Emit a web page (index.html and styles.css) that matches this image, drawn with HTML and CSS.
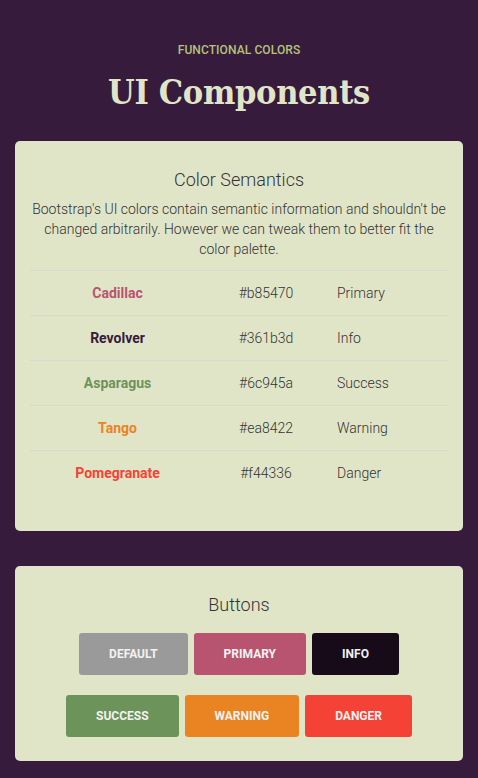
FILE: index.html
```html
<!DOCTYPE html>
<html>
<head>
<meta charset="utf-8">
<link rel="stylesheet" href="styles.css">
</head>
<body>
<header class="hero">
  <div class="eyebrow">FUNCTIONAL COLORS</div>
  <h1 class="title">UI Components</h1>
</header>
<section class="card card-colors">
  <h2 class="card-title">Color Semantics</h2>
  <p class="lead">Bootstrap's UI colors contain semantic information and shouldn't be changed arbitrarily. However we can tweak them to better fit the color palette.</p>
  <div class="table">
    <div class="row"><span class="name c-primary">Cadillac</span><span class="hex">#b85470</span><span class="label">Primary</span></div>
    <div class="row"><span class="name c-info">Revolver</span><span class="hex">#361b3d</span><span class="label">Info</span></div>
    <div class="row"><span class="name c-success">Asparagus</span><span class="hex">#6c945a</span><span class="label">Success</span></div>
    <div class="row"><span class="name c-warning">Tango</span><span class="hex">#ea8422</span><span class="label">Warning</span></div>
    <div class="row"><span class="name c-danger">Pomegranate</span><span class="hex">#f44336</span><span class="label">Danger</span></div>
  </div>
</section>
<section class="card card-buttons">
  <h2 class="card-title">Buttons</h2>
  <div class="btn-row">
    <span class="btn btn-default">DEFAULT</span>
    <span class="btn btn-primary">PRIMARY</span>
    <span class="btn btn-info">INFO</span>
  </div>
  <div class="btn-row">
    <span class="btn btn-success">SUCCESS</span>
    <span class="btn btn-warning">WARNING</span>
    <span class="btn btn-danger">DANGER</span>
  </div>
</section>
</body>
</html>
```
FILE: styles.css
```css
html, body {
  margin: 0;
  padding: 0;
  background: #361b3d;
  font-family: Roboto, "Liberation Sans", sans-serif;
  color: #333;
}
body {
  padding: 0 15px 20px;
}
.hero {
  text-align: center;
  padding-top: 43px;
  padding-bottom: 27px;
}
.eyebrow {
  font-size: 12px;
  font-weight: 500;
  color: #b5c27a;
  line-height: 14px;
  letter-spacing: 0.1px;
}
.title {
  margin: 13px 0 0;
  font-family: "DejaVu Serif Condensed", "DejaVu Serif", "Liberation Serif", serif;
  font-weight: bold;
  font-size: 34px;
  line-height: 44px;
  color: #e1e5c8;
  letter-spacing: -0.3px;
}
.card {
  background: #e1e5c8;
  border-radius: 5px;
  padding: 15px;
  text-align: center;
}
.card-colors {
  padding-bottom: 36px;
}
.card-buttons {
  margin-top: 35px;
  padding-bottom: 24px;
}
.card-title {
  margin: 12px 0 0;
  font-size: 18px;
  font-weight: 300;
  line-height: 24px;
  color: #333;
}
.lead {
  margin: 7px 0 11px;
  font-size: 14px;
  font-weight: 300;
  line-height: 20px;
  color: #333;
}
.table {
  text-align: left;
}
.row {
  display: grid;
  grid-template-columns: 175px 122px 1fr;
  height: 44px;
  align-items: center;
  border-top: 1px solid #d8dbcb;
  font-size: 14px;
}
.name {
  font-weight: 700;
  text-align: center;
}
.hex {
  font-weight: 300;
  text-align: center;
}
.label {
  font-weight: 300;
  padding-left: 10px;
}
.c-primary { color: #b85470; }
.c-info { color: #361b3d; }
.c-success { color: #6c945a; }
.c-warning { color: #ea8422; }
.c-danger { color: #f44336; }
.btn-row {
  display: flex;
  justify-content: center;
  gap: 6px;
}
.card-buttons .card-title {
  margin-bottom: 16px;
}
.btn-row + .btn-row {
  margin-top: 20px;
}
.btn {
  display: block;
  padding: 13px 30px;
  line-height: 16px;
  font-size: 12px;
  font-weight: 700;
  color: #f2f2f2;
  border-radius: 3px;
}
.btn-default { background: #9a9a9a; }
.btn-primary { background: #b85470; }
.btn-info { background: #170b1a; }
.btn-success { background: #6c945a; }
.btn-warning { background: #ea8422; }
.btn-danger { background: #f44336; }
```
